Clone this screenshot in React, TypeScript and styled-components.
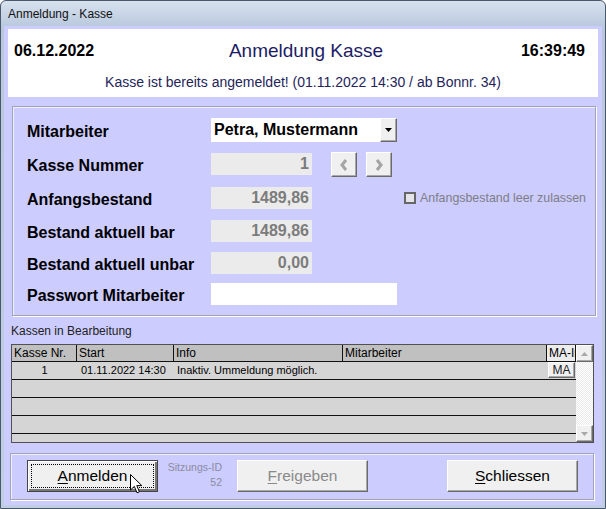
import styled, { createGlobalStyle } from "styled-components";

const GlobalStyle = createGlobalStyle`
  html, body {
    margin: 0;
    padding: 0;
    background: #ffffff;
  }
  body {
    font-family: "Liberation Sans", Arial, sans-serif;
    color: #000;
  }
`;

const rows = [
  { nr: "1", start: "01.11.2022 14:30", info: "Inaktiv. Ummeldung möglich.", ma: true },
  { nr: "", start: "", info: "", ma: false },
  { nr: "", start: "", info: "", ma: false },
  { nr: "", start: "", info: "", ma: false },
  { nr: "", start: "", info: "", ma: false },
];

const Window = styled.div`
  position: relative;
  width: 606px;
  height: 509px;
  box-sizing: border-box;
  border: 1px solid #4a586c;
  border-radius: 6px 6px 0 0;
  background: linear-gradient(#d8e2ef, #b9c8dd 26px, #bfcee2);
  padding: 0 3px 3px;
  display: flex;
  flex-direction: column;
  overflow: hidden;
`;

const TitleBar = styled.div`
  height: 25px;
  display: flex;
  align-items: center;
  padding-left: 4px;
  font-size: 12px;
  color: #111;
`;

const Client = styled.div`
  flex: 1;
  background: #ccccff;
  display: flex;
  flex-direction: column;
  align-items: flex-start;
`;

const Header = styled.div`
  margin: 3px 0 0 4px;
  width: 590px;
  height: 68px;
  box-sizing: border-box;
  background: #ffffff;
  padding: 11px 13px 0 6px;
`;

const HeaderTop = styled.div`
  display: grid;
  grid-template-columns: 1fr auto 1fr;
  align-items: center;
  height: 20px;
`;

const Stamp = styled.div<{ $right?: boolean }>`
  font-size: 16px;
  font-weight: bold;
  text-align: ${(p) => (p.$right ? "right" : "left")};
`;

const Heading = styled.div`
  font-size: 19px;
  color: #1c1c66;
  padding-left: 13px;
`;

const Notice = styled.div`
  margin-top: 14px;
  line-height: 16px;
  font-size: 14px;
  color: #24245a;
  text-align: center;
  padding-left: 7px;
`;

const Panel = styled.div<{ $h: number; $ml: number }>`
  width: 584px;
  height: ${(p) => p.$h}px;
  box-sizing: border-box;
  margin-left: ${(p) => p.$ml}px;
  border: 1px solid #a3a3b8;
  box-shadow: 1px 1px 0 #ffffff, inset 1px 1px 0 #eeeeff;
`;

const FormPanel = styled(Panel)`
  margin-top: 9px;
  padding: 11px 0 0 14px;
  display: grid;
  grid-template-columns: 184px 101px 92px 1fr;
  grid-template-rows: 35px 34px 33px 32px 31px 22px;
`;

const Label = styled.div<{ $h: number }>`
  grid-column: 1;
  font-size: 16px;
  font-weight: bold;
  line-height: ${(p) => p.$h}px;
  height: ${(p) => p.$h}px;
  padding-top: 2px;
  white-space: nowrap;
`;

const Combo = styled.div`
  grid-column: 2 / 4;
  width: 186px;
  height: 24px;
  display: flex;
  background: #ffffff;
`;

const ComboText = styled.div`
  flex: 1;
  padding-left: 3px;
  font-size: 16px;
  font-weight: bold;
  line-height: 24px;
`;

const Bevel = styled.div`
  box-sizing: border-box;
  background: #f0f0f0;
  border-top: 1px solid #ffffff;
  border-left: 1px solid #ffffff;
  border-right: 1px solid #6a6a6a;
  border-bottom: 1px solid #6a6a6a;
  box-shadow: inset -1px -1px 0 #a8a8a8;
  display: flex;
  align-items: center;
  justify-content: center;
`;

const DropButton = styled(Bevel)`
  width: 17px;
  height: 24px;
`;

const ReadOnly = styled.div`
  grid-column: 2;
  width: 101px;
  height: 22px;
  box-sizing: border-box;
  background: #ebebeb;
  padding-right: 3px;
  text-align: right;
  font-size: 16px;
  font-weight: bold;
  line-height: 22px;
  color: #7c7c7c;
`;

const Password = styled.div`
  grid-column: 2 / 4;
  width: 186px;
  height: 22px;
  background: #ffffff;
`;

const NavGroup = styled.div`
  grid-column: 3;
  grid-row: 2;
  display: flex;
  gap: 9px;
  padding-left: 19px;
  margin-top: -1px;
  align-self: start;
`;

const NavButton = styled(Bevel)`
  width: 26px;
  height: 25px;
`;

const CheckRow = styled.label`
  grid-column: 4;
  grid-row: 3;
  display: flex;
  align-items: center;
  gap: 4px;
  height: 22px;
  font-size: 12.4px;
  color: #7e7e86;
`;

const CheckBox = styled.span`
  width: 12px;
  height: 12px;
  box-sizing: border-box;
  border: 2px solid #666666;
  background: #e4e4ea;
`;

const Caption = styled.div`
  margin: 8px 0 0 7px;
  font-size: 12px;
  line-height: 14px;
  color: #222;
`;

const Table = styled.div`
  margin: 6px 0 0 7px;
  width: 583px;
  height: 99px;
  box-sizing: border-box;
  border: 1px solid #505050;
  display: flex;
  background: #d5d5d5;
`;

const GridArea = styled.div`
  flex: 1;
  overflow: hidden;
`;

const TRow = styled.div<{ $head?: boolean }>`
  display: grid;
  grid-template-columns: 65px 97px 169px 204px 29px;
  height: ${(p) => (p.$head ? 17 : 18)}px;
  box-sizing: border-box;
  border-bottom: 1px solid #111;
  background: ${(p) => (p.$head ? "#c0c0c0" : "#d5d5d5")};
`;

const HCell = styled.div<{ $light?: boolean }>`
  border-right: 1px solid #111;
  font-size: 12px;
  line-height: 16px;
  padding-left: 2px;
  white-space: nowrap;
  overflow: hidden;
  background: ${(p) => (p.$light ? "#ececec" : "transparent")};
`;

const Cell = styled.div<{ $center?: boolean; $pad?: number }>`
  font-size: 11px;
  line-height: 17px;
  white-space: nowrap;
  overflow: hidden;
  text-align: ${(p) => (p.$center ? "center" : "left")};
  padding-left: ${(p) => p.$pad ?? 0}px;
`;

const MaButton = styled(Bevel)`
  width: 27px;
  height: 16px;
  margin-left: 1px;
  font-size: 12px;
  color: #222;
`;

const Scrollbar = styled.div`
  width: 17px;
  display: flex;
  flex-direction: column;
  background: repeating-conic-gradient(#ffffff 0 25%, #ebebeb 0 50%) 0 0 / 2px 2px;
`;

const ScrollTrack = styled.div`
  flex: 1;
`;

const ScrollButton = styled(Bevel)`
  width: 17px;
  height: 17px;
`;

const ButtonPanel = styled(Panel)`
  margin-top: 10px;
  padding: 6px 15px 0 16px;
  display: flex;
  align-items: flex-start;
`;

const Button = styled.div<{ $default?: boolean; $disabled?: boolean }>`
  width: 131px;
  height: 32px;
  box-sizing: border-box;
  background: #f0f0f0;
  border-top: 1px solid ${(p) => (p.$default ? "#444" : "#ffffff")};
  border-left: 1px solid ${(p) => (p.$default ? "#444" : "#ffffff")};
  border-right: 1px solid ${(p) => (p.$default ? "#444" : "#6a6a6a")};
  border-bottom: 1px solid ${(p) => (p.$default ? "#444" : "#6a6a6a")};
  box-shadow: ${(p) =>
    p.$default ? "inset 1px 1px 0 #fff, inset -2px -2px 0 #777" : "inset -1px -1px 0 #a8a8a8"};
  outline: ${(p) => (p.$default ? "1px dotted #000" : "none")};
  outline-offset: -5px;
  display: flex;
  align-items: center;
  justify-content: center;
  font-size: 15.5px;
  color: ${(p) => (p.$disabled ? "#8a8a8a" : "#000")};
`;

const Mnemonic = styled.span`
  text-decoration: underline;
  text-underline-offset: 2px;
`;

const Session = styled.div`
  width: 56px;
  margin: 0 15px 0 8px;
  font-size: 10.5px;
  line-height: 15px;
  color: #8b8ba0;
  text-align: right;
  white-space: nowrap;
`;

const Spacer = styled.div`
  flex: 1;
`;

const Cursor = styled.svg`
  position: absolute;
  left: 129px;
  top: 473px;
`;

const Chevron = ({ left }: { left?: boolean }) => (
  <svg width="10" height="14" viewBox="0 0 10 14">
    <polyline
      points={left ? "7,2 3,7 7,12" : "3,2 7,7 3,12"}
      fill="none"
      stroke="#a4a4a4"
      strokeWidth="3"
    />
  </svg>
);

const Triangle = ({ up, color }: { up?: boolean; color: string }) => (
  <svg width="7" height="4" viewBox="0 0 7 4">
    <polygon points={up ? "0,4 7,4 3.5,0" : "0,0 7,0 3.5,4"} fill={color} />
  </svg>
);

export default function App() {
  return (
    <>
      <GlobalStyle />
      <Window>
        <TitleBar>Anmeldung - Kasse</TitleBar>
        <Client>
          <Header>
            <HeaderTop>
              <Stamp>06.12.2022</Stamp>
              <Heading>Anmeldung Kasse</Heading>
              <Stamp $right>16:39:49</Stamp>
            </HeaderTop>
            <Notice>Kasse ist bereits angemeldet! (01.11.2022 14:30 / ab Bonnr. 34)</Notice>
          </Header>

          <FormPanel $h={210} $ml={8}>
            <Label $h={24}>Mitarbeiter</Label>
            <Combo>
              <ComboText>Petra, Mustermann</ComboText>
              <DropButton>
                <Triangle color="#000" />
              </DropButton>
            </Combo>

            <Label $h={22}>Kasse Nummer</Label>
            <ReadOnly>1</ReadOnly>
            <NavGroup>
              <NavButton>
                <Chevron left />
              </NavButton>
              <NavButton>
                <Chevron />
              </NavButton>
            </NavGroup>

            <Label $h={22}>Anfangsbestand</Label>
            <ReadOnly>1489,86</ReadOnly>
            <CheckRow>
              <CheckBox />
              Anfangsbestand leer zulassen
            </CheckRow>

            <Label $h={22}>Bestand aktuell bar</Label>
            <ReadOnly>1489,86</ReadOnly>

            <Label $h={22}>Bestand aktuell unbar</Label>
            <ReadOnly>0,00</ReadOnly>

            <Label $h={22}>Passwort Mitarbeiter</Label>
            <Password />
          </FormPanel>

          <Caption>Kassen in Bearbeitung</Caption>
          <Table>
            <GridArea>
              <TRow $head>
                <HCell>Kasse Nr.</HCell>
                <HCell>Start</HCell>
                <HCell>Info</HCell>
                <HCell>Mitarbeiter</HCell>
                <HCell $light>MA-Info</HCell>
              </TRow>
              {rows.map((r, i) => (
                <TRow key={i}>
                  <Cell $center>{r.nr}</Cell>
                  <Cell $pad={4}>{r.start}</Cell>
                  <Cell $pad={3}>{r.info}</Cell>
                  <Cell />
                  <div>{r.ma && <MaButton>MA</MaButton>}</div>
                </TRow>
              ))}
            </GridArea>
            <Scrollbar>
              <ScrollButton>
                <Triangle up color="#a8a8a8" />
              </ScrollButton>
              <ScrollTrack />
              <ScrollButton>
                <Triangle color="#a8a8a8" />
              </ScrollButton>
            </Scrollbar>
          </Table>

          <ButtonPanel $h={47} $ml={6}>
            <Button $default>
              <span>
                <Mnemonic>A</Mnemonic>nmelden
              </span>
            </Button>
            <Session>
              Sitzungs-ID
              <br />
              52
            </Session>
            <Button $disabled>
              <span>
                <Mnemonic>F</Mnemonic>reigeben
              </span>
            </Button>
            <Spacer />
            <Button>
              <span>
                <Mnemonic>S</Mnemonic>chliessen
              </span>
            </Button>
          </ButtonPanel>
        </Client>
        <Cursor width="13" height="20" viewBox="0 0 13 20">
          <path
            d="M0.5 0.5 L0.5 16 L4.3 12.4 L7 18.8 L9.4 17.8 L6.8 11.6 L11.8 11.6 Z"
            fill="#fff"
            stroke="#000"
            strokeWidth="1"
            strokeLinejoin="miter"
          />
        </Cursor>
      </Window>
    </>
  );
}
